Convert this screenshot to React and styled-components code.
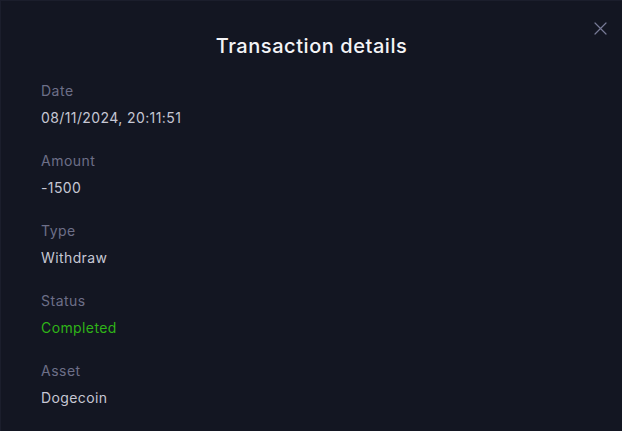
import React from "react";
import styled, { createGlobalStyle } from "styled-components";

const Global = createGlobalStyle`
  html, body { margin: 0; padding: 0; background: #131622; }
  body { font-family: "Inter", "Noto Sans", sans-serif; }
`;

const Modal = styled.div`
  position: relative;
  box-sizing: border-box;
  width: 622px;
  height: 431px;
  background: #131622;
  border-left: 1px solid #1b1e2c;
  border-top: 1px solid #1b1e2c;
  padding: 32px 40px 0 40px;
  overflow: hidden;
`;

const Title = styled.h2`
  margin: 0 0 21px 0;
  text-align: center;
  font-size: 20px;
  font-weight: 500;
  color: #f4f4f7;
  line-height: 26px;
  letter-spacing: 0.55px;
`;

const Close = styled.button`
  position: absolute;
  top: 19px;
  right: 14px;
  width: 16px;
  height: 16px;
  padding: 0;
  border: 0;
  background: none;
  cursor: pointer;
  display: flex;
  align-items: center;
  justify-content: center;
`;

const List = styled.dl`
  margin: 0;
  display: flex;
  flex-direction: column;
  gap: 22px;
`;

const Field = styled.div`
  display: flex;
  flex-direction: column;
  gap: 6px;
`;

const Label = styled.dt`
  font-size: 14px;
  line-height: 21px;
  letter-spacing: 0.5px;
  color: #6d6f88;
`;

const Value = styled.dd`
  margin: 0;
  font-size: 14px;
  line-height: 21px;
  letter-spacing: 0.4px;
  color: ${(p) => (p.$status ? "#2fb418" : "#c6c7d4")};
`;

const fields = [
  { label: "Date", value: "08/11/2024, 20:11:51" },
  { label: "Amount", value: "-1500" },
  { label: "Type", value: "Withdraw" },
  { label: "Status", value: "Completed", status: true },
  { label: "Asset", value: "Dogecoin" },
];

export default function App() {
  return (
    <>
      <Global />
      <Modal>
        <Close aria-label="Close">
          <svg width="13" height="13" viewBox="0 0 13 13">
            <path d="M1 1L12 12M12 1L1 12" stroke="#777a96" strokeWidth="1.2" strokeLinecap="round" />
          </svg>
        </Close>
        <Title>Transaction details</Title>
        <List>
          {fields.map((f) => (
            <Field key={f.label}>
              <Label>{f.label}</Label>
              <Value $status={f.status}>{f.value}</Value>
            </Field>
          ))}
        </List>
      </Modal>
    </>
  );
}
